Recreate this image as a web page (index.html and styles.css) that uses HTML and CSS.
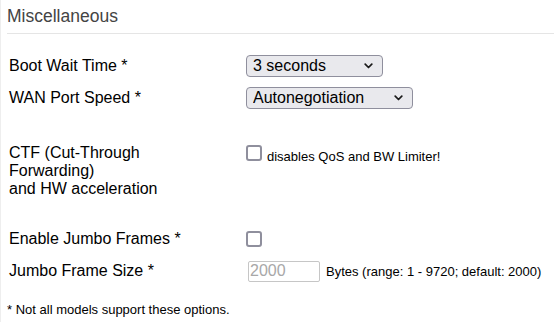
FILE: index.html
```html
<!DOCTYPE html>
<html lang="en">
<head>
  <meta charset="UTF-8" />
  <title>Miscellaneous</title>
  <link rel="stylesheet" href="styles.css">
</head>
<body>
  <div class="section">
    <div class="section-title">Miscellaneous</div>

    <div class="fields">
      <div class="row">
        <div class="label">Boot Wait Time *</div>
        <div class="value">
          <span class="select-wrap">
            <select class="select-short">
              <option>3 seconds</option>
            </select>
            <svg class="chev" viewBox="0 0 9 6"><polyline points="1.2,1.2 4.5,4.5 7.8,1.2" fill="none" stroke="#1a1a1a" stroke-width="1.7" stroke-linecap="round" stroke-linejoin="round"/></svg>
          </span>
        </div>
      </div>

      <div class="row">
        <div class="label">WAN Port Speed *</div>
        <div class="value">
          <span class="select-wrap">
            <select class="select-long">
              <option>Autonegotiation</option>
            </select>
            <svg class="chev" viewBox="0 0 9 6"><polyline points="1.2,1.2 4.5,4.5 7.8,1.2" fill="none" stroke="#1a1a1a" stroke-width="1.7" stroke-linecap="round" stroke-linejoin="round"/></svg>
          </span>
        </div>
      </div>

      <div class="row row-tall">
        <div class="label label-multi">CTF (Cut-Through<br>Forwarding)<br>and HW acceleration</div>
        <div class="value value-check">
          <input type="checkbox" id="ctf">
          <label for="ctf" class="hint hint-check">disables QoS and BW Limiter!</label>
        </div>
      </div>

      <div class="row row-after">
        <div class="label">Enable Jumbo Frames *</div>
        <div class="value">
          <input type="checkbox" id="jumbo">
        </div>
      </div>

      <div class="row">
        <div class="label">Jumbo Frame Size *</div>
        <div class="value">
          <input type="text" class="num-input" value="2000" disabled>
          <span class="hint">Bytes (range: 1 - 9720; default: 2000)</span>
        </div>
      </div>
    </div>

    <div class="note">* Not all models support these options.</div>
  </div>
</body>
</html>
```

FILE: styles.css
```css
body {
  margin: 0;
  font-family: "Liberation Sans", Arial, sans-serif;
  background: #fff;
  color: #000;
}
.section {
  border-left: 1px solid #eee;
  padding: 6px 0 0 6px;
  height: 322px;
  box-sizing: border-box;
}
.section-title {
  font-size: 17.5px;
  line-height: 20px;
  color: #444;
  padding-bottom: 7px;
  border-bottom: 1px solid #e5e5e5;
}
.fields {
  margin-top: 15.5px;
}
.row {
  display: flex;
  align-items: center;
  height: 32px;
}
.label {
  width: 239px;
  padding-left: 2px;
  box-sizing: border-box;
  font-size: 16px;
}
.value {
  display: flex;
  align-items: center;
}
.row-tall {
  height: auto;
  align-items: flex-start;
  margin-top: 30px;
}
.label-multi {
  line-height: 18px;
}
.value-check {
  align-items: flex-start;
  padding-top: 1.3px;
}
.row-after {
  margin-top: 25.5px;
}
.select-wrap {
  position: relative;
  display: inline-block;
}
select {
  -webkit-appearance: none;
  appearance: none;
  display: block;
  height: 22px;
  box-sizing: border-box;
  font-family: "Liberation Sans", Arial, sans-serif;
  font-size: 16px;
  color: #000;
  background: #e9e9ed;
  border: 1px solid #8f8f9d;
  border-radius: 4px;
  padding: 0 0 0 6px;
}
.select-short {
  width: 137px;
}
.select-long {
  width: 167px;
}
.chev {
  position: absolute;
  right: 10px;
  top: 50%;
  width: 9px;
  height: 6px;
  margin-top: -3px;
  pointer-events: none;
}
input[type="checkbox"] {
  -webkit-appearance: none;
  appearance: none;
  width: 16px;
  height: 16px;
  margin: 0;
  box-sizing: border-box;
  border: 2px solid #8f8f9d;
  border-radius: 3px;
  background: #fff;
}
.num-input {
  width: 72px;
  height: 21px;
  box-sizing: border-box;
  margin: 0 0 0 2px;
  padding: 0 1px;
  font-family: "Liberation Sans", Arial, sans-serif;
  font-size: 16px;
  color: #a8a8a8;
  background: #fff;
  border: 1px solid #c6c6c6;
  border-radius: 2px;
}
.hint {
  font-size: 13px;
  margin-left: 6px;
}
.hint-check {
  margin-left: 5px;
  margin-top: 4.5px;
  line-height: 15px;
}
.note {
  font-size: 13px;
  line-height: 15px;
  margin-top: 15px;
}
```
